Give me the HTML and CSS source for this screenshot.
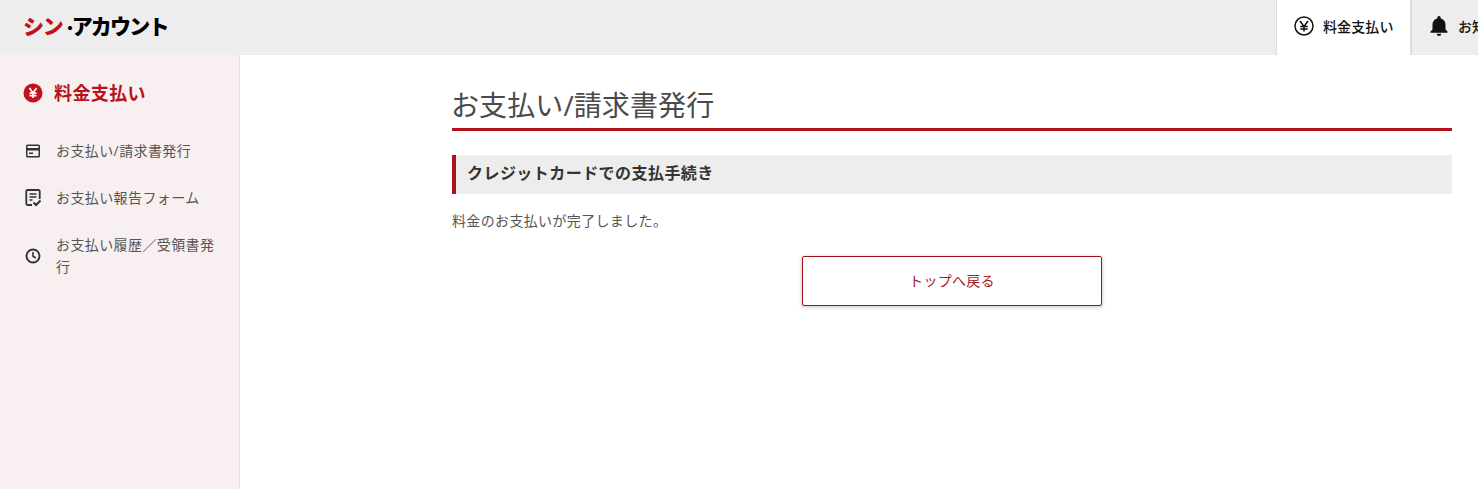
FILE: index.html
```html
<!DOCTYPE html>
<html lang="ja">
<head>
    <meta charset="UTF-8">
    <title>シン・アカウント</title>
    <link rel="stylesheet" href="styles.css">
</head>
<body>
    <header class="header">
        <div class="logo"><span class="logo-red">シン</span><span class="logo-dot">・</span>アカウント</div>
        <nav class="top-nav">
            <a class="top-tab active">
                <svg class="top-icon" viewBox="0 0 20 20" width="20" height="20"><circle cx="10" cy="10" r="9" fill="none" stroke="#111" stroke-width="1.500"/><path d="M6 5L10 10.500L14 5M10 10.500V15.500M6.300 10.500H13.700M6.300 13H13.700" fill="none" stroke="#111" stroke-width="1.500"/></svg>
                <span>料金支払い</span>
            </a>
            <a class="top-tab">
                <svg class="top-icon" viewBox="0 0 20 20" width="20" height="20"><path d="M10 20a2.200 2.200 0 0 0 2.200-2.200H7.800A2.200 2.200 0 0 0 10 20zM16.500 13.500V9c0-3.300-1.700-5.700-4.800-6.400V1.800a1.700 1.700 0 0 0-3.400 0V2.600C5.200 3.300 3.500 5.700 3.500 9v4.500L1.500 15.500V16.800h17V15.500z" fill="#111"/></svg>
                <span>お知らせ</span>
            </a>
        </nav>
    </header>

    <div class="page">
        <aside class="sidebar">
            <h2 class="side-title">
                <svg viewBox="0 0 20 20" width="20" height="20"><circle cx="10" cy="10" r="9.500" fill="#c1121c"/><path d="M6.500 5L10 10L13.500 5M10 10V15M6.500 10.200H13.500M6.500 12.600H13.500" fill="none" stroke="#fff" stroke-width="1.700"/></svg>
                <span>料金支払い</span>
            </h2>
            <ul class="side-menu">
                <li class="side-item">
                    <svg viewBox="0 0 16 16" width="16" height="16"><path d="M2.500 1.500h11A1.500 1.500 0 0 1 15 3v10a1.500 1.500 0 0 1-1.500 1.500h-11A1.500 1.500 0 0 1 1 13V3a1.500 1.500 0 0 1 1.500-1.500zM2.500 3v2h11V3zM2.500 7.500V13h11V7.500zM4 9.500h4V11H4z" fill="#333" fill-rule="evenodd"/></svg>
                    <span>お支払い/請求書発行</span>
                </li>
                <li class="side-item">
                    <svg viewBox="0 0 16 18" width="16" height="18"><path d="M7 16H2.500A1.200 1.200 0 0 1 1.300 14.800V2.200A1.200 1.200 0 0 1 2.500 1h11a1.200 1.200 0 0 1 1.200 1.200V10" fill="none" stroke="#333" stroke-width="1.800"/><path d="M4.500 5h7M4.500 8h7M4.500 11h3" stroke="#333" stroke-width="1.400"/><path d="M8.500 13.500L11 16L15.500 11.500" fill="none" stroke="#333" stroke-width="2"/></svg>
                    <span>お支払い報告フォーム</span>
                </li>
                <li class="side-item">
                    <svg viewBox="0 0 16 16" width="16" height="16"><circle cx="8" cy="8" r="6.500" fill="none" stroke="#333" stroke-width="1.900"/><path d="M8 4v4.300l2.800 1.700" fill="none" stroke="#333" stroke-width="1.600"/></svg>
                    <span>お支払い履歴／受領書発行</span>
                </li>
            </ul>
        </aside>

        <main class="content">
            <h1 class="page-title">お支払い/請求書発行</h1>
            <h2 class="section-title">クレジットカードでの支払手続き</h2>
            <p class="message">料金のお支払いが完了しました。</p>
            <div class="actions">
                <a class="back-btn">トップへ戻る</a>
            </div>
        </main>
    </div>
</body>
</html>
```

FILE: styles.css
```css
* {
    box-sizing: border-box;
}
html, body {
    height: 100%;
    overflow: hidden;
}
body {
    margin: 0;
    font-family: "Open Sans", "Noto Sans CJK JP", sans-serif;
    font-size: 14px;
    color: #4a4a4a;
    background: white;
}
.header {
    height: 55px;
    background: #ededed;
    display: flex;
    justify-content: space-between;
    padding-left: 23px;
}
.logo {
    font-family: "Noto Sans CJK JP", sans-serif;
    font-size: 21px;
    font-weight: 900;
    line-height: 50px;
    letter-spacing: -1.800px;
    color: #000;
    white-space: nowrap;
}
.logo-red {
    color: #c1121c;
    letter-spacing: -1.200px;
}
.logo-dot {
    font-size: 15px;
    letter-spacing: -6px;
}
.top-nav {
    display: flex;
    width: 202px;
    flex-shrink: 0;
    overflow: hidden;
}
.top-tab {
    display: flex;
    align-items: center;
    gap: 9px;
    height: 55px;
    padding: 0 17px 3px 17px;
    width: 135px;
    flex-shrink: 0;
    font-size: 14px;
    font-weight: 500;
    letter-spacing: 0.100px;
    color: #111;
    white-space: nowrap;
    border-left: 1px solid #ddd;
}
.top-tab.active {
    background: white;
    border-right: 1px solid #ddd;
}
.top-icon {
    flex-shrink: 0;
}
.page {
    display: flex;
    height: 434px;
}
.sidebar {
    width: 240px;
    flex-shrink: 0;
    background: #f8f0f0;
    border-right: 1px solid #e2e2e2;
    padding: 28px 24px 0 23px;
}
.side-title {
    display: flex;
    align-items: center;
    gap: 11px;
    margin: 0 0 37px;
    font-size: 18px;
    font-weight: 700;
    line-height: 20px;
    letter-spacing: 0.400px;
    color: #b8121c;
}
.side-menu {
    list-style: none;
    margin: 0;
    padding: 0;
}
.side-item {
    display: flex;
    align-items: center;
    gap: 15px;
    margin-bottom: 25px;
    padding-left: 2px;
    line-height: 22px;
    font-size: 14px;
    letter-spacing: 0.400px;
    color: #555;
}
.side-item svg {
    flex-shrink: 0;
}
.content {
    flex: 1;
    padding: 32px 26px 0 212px;
}
.page-title {
    margin: 0 0 24px;
    height: 44px;
    font-size: 28px;
    font-weight: 400;
    line-height: 36px;
    letter-spacing: 0.100px;
    text-indent: -1px;
    color: #4a4a4a;
    border-bottom: 3px solid #b0121c;
}
.section-title {
    margin: 0 0 17px;
    height: 39px;
    padding-left: 11px;
    border-left: 4px solid #b0121c;
    background: #ededed;
    font-size: 16px;
    font-weight: 700;
    line-height: 37px;
    letter-spacing: 0.450px;
    color: #333;
}
.message {
    margin: 0 0 25px;
    font-size: 14px;
    line-height: 20px;
    letter-spacing: 0.350px;
    color: #555;
}
.actions {
    display: flex;
    justify-content: center;
}
.back-btn {
    display: block;
    width: 300px;
    height: 50px;
    border: 1px solid #a3121c;
    border-radius: 2px;
    background: white;
    color: #a3222b;
    font-size: 14px;
    line-height: 48px;
    letter-spacing: 0.300px;
    text-align: center;
    box-shadow: 0 1px 4px rgba(0,0,0,0.25);
}
```
